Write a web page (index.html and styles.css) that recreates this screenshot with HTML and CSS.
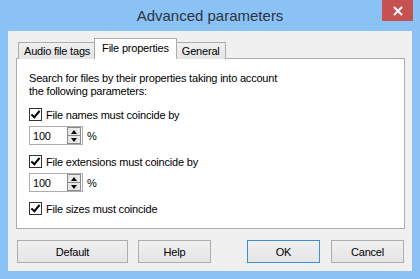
FILE: index.html
```html
<!DOCTYPE html>
<html>
	<head>
		<meta charset="utf-8" />
		<title>Advanced parameters</title>
		<link rel="stylesheet" href="styles.css">
	</head>
	<body>
		<div class="window">
			<div class="titlebar">
				<span class="title">Advanced parameters</span>
				<a class="close"><svg width="10" height="10" viewBox="0 0 10 10"><path d="M1 1L9 9M9 1L1 9" stroke="#fff" stroke-width="2"/></svg></a>
			</div>
			<div class="client">
				<ul class="tabs">
					<li>Audio file tags</li>
					<li class="active">File properties</li>
					<li>General</li>
				</ul>
				<div class="panel">
					<p class="intro">Search for files by their properties taking into account<br>the following parameters:</p>
					<label class="check"><span class="box"></span>File names must coincide by</label>
					<div class="spinrow">
						<div class="spin"><span class="val">100</span><span class="arrows"><i class="up"></i><i class="down"></i></span></div>
						<span class="pct">%</span>
					</div>
					<label class="check"><span class="box"></span>File extensions must coincide by</label>
					<div class="spinrow">
						<div class="spin"><span class="val">100</span><span class="arrows"><i class="up"></i><i class="down"></i></span></div>
						<span class="pct">%</span>
					</div>
					<label class="check"><span class="box"></span>File sizes must coincide</label>
				</div>
				<div class="buttons">
					<div class="left">
						<a class="btn wide">Default</a>
						<a class="btn">Help</a>
					</div>
					<div class="right">
						<a class="btn focus">OK</a>
						<a class="btn">Cancel</a>
					</div>
				</div>
			</div>
		</div>
	</body>
</html>
```

FILE: styles.css
```css
body,ul,p{padding: 0;margin: 0;}
body{font-family: "Liberation Sans", Arial, sans-serif;font-size: 11px;color: #000;letter-spacing: -0.2px;}

.window{width: 420px;height: 279px;box-sizing: border-box;background: #8ac2f5;padding: 0 8px 8px;display: flex;flex-direction: column;}
.titlebar{height: 31px;position: relative;display: flex;align-items: center;justify-content: center;}
.title{font-size: 15px;color: #2b3440;padding-bottom: 1px;letter-spacing: 0;}
.close{position: absolute;top: 0;right: -1px;width: 31px;height: 21px;background: #c75050;display: flex;align-items: center;justify-content: center;}

.client{flex: 1;background: #f0f0f0;padding: 8px 7px 8px 8px;display: flex;flex-direction: column;}
.tabs{list-style: none;display: flex;align-items: flex-end;height: 20px;margin-left: 2px;position: relative;z-index: 1;}
.tabs li{height: 16px;line-height: 16px;padding: 0 5px;border: 1px solid #acacac;border-bottom: none;background: linear-gradient(#f0f0f0,#e5e5e5);margin-right: -1px;}
.tabs li.active{height: 20px;line-height: 18px;background: #fff;padding: 0 7px;margin-left: -1px;margin-right: -1px;position: relative;z-index: 2;}

.panel{height: 171px;box-sizing: border-box;border: 1px solid #acacac;margin-top: -1px;background: #fff;padding: 13px 12px 0;}
.intro{line-height: 13px;margin-bottom: 9px;}
.check{display: flex;align-items: center;height: 15px;}
.box{width: 11px;height: 11px;border: 1px solid #333;background: #fff;margin-right: 4px;position: relative;}
.box::after{content: "";position: absolute;left: 3px;top: 0px;width: 3px;height: 7px;border: solid #000;border-width: 0 2px 2px 0;transform: rotate(40deg);}
.spinrow{display: flex;align-items: center;margin: 4px 0 9px;}
.spin{width: 54px;height: 19px;box-sizing: border-box;border: 1px solid #abadb3;display: flex;align-items: center;justify-content: space-between;padding-left: 3px;}
.arrows{display: flex;flex-direction: column;width: 14px;height: 17px;margin-right: 1px;}
.arrows i{flex: 1;background: #e8e8e8;border: 1px solid #8a8a8a;margin-top: -1px;position: relative;}
.arrows i:first-child{margin-top: 0;}
.arrows i::after{content: "";position: absolute;left: 3px;top: 2px;border-left: 3px solid transparent;border-right: 3px solid transparent;}
.arrows i.up::after{border-bottom: 4px solid #000;}
.arrows i.down::after{border-top: 4px solid #000;top: 2px;}
.pct{margin-left: 4px;}

.buttons{display: flex;justify-content: space-between;margin-top: 11px;}
.left,.right{display: flex;gap: 10px;}
.btn{width: 73px;height: 23px;box-sizing: border-box;border: 1px solid #adadad;background: linear-gradient(#f0f0f0,#e5e5e5);display: flex;align-items: center;justify-content: center;}
.btn.wide{width: 111px;}
.btn.focus{border-color: #3c8fe0;}
.left{margin-left: 1px;}
.right{margin-right: 1px;gap: 11px;}
```
